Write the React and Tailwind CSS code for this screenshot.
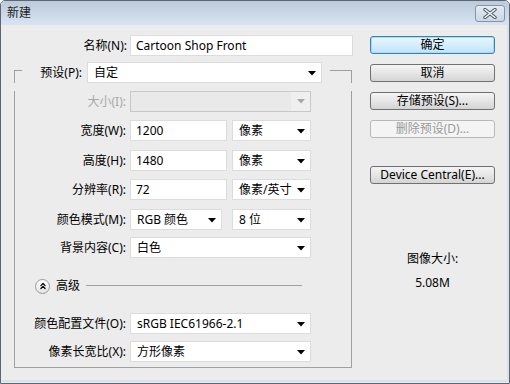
import { ChevronsUp } from 'lucide-react';

const font = { fontFamily: '"Noto Sans", "Noto Sans CJK SC", sans-serif' };

function Arrow({ gray }) {
  return (
    <svg width="8" height="5" viewBox="0 0 8 5" className="shrink-0">
      <polygon points="0,0 8,0 4,4.5" fill={gray ? '#a8a8a8' : '#000'} />
    </svg>
  );
}

function Select({ value, className }) {
  return (
    <div
      className={`flex h-[21px] items-center justify-between border border-[#dcdcdc] bg-white pl-[6px] pr-[5px] pt-[1px] ${className}`}
    >
      <span className="whitespace-nowrap">{value}</span>
      <Arrow />
    </div>
  );
}

function TextBox({ value, className }) {
  return (
    <div className={`flex h-[21px] items-center border border-[#dcdcdc] bg-white pl-[5px] ${className}`}>
      <span className="whitespace-nowrap">{value}</span>
    </div>
  );
}

function Row({ label, children, className }) {
  return (
    <div className={`flex h-[21px] items-center ${className}`}>
      <div className="w-[112px] whitespace-nowrap pr-[1px] text-right">{label}</div>
      <div className="ml-[3px] flex items-center gap-[5px]">{children}</div>
    </div>
  );
}

function Button({ children, primary, disabled, className }) {
  let look = 'border-[#707070] bg-gradient-to-b from-[#f4f4f4] via-[#e6e6e6] to-[#d4d4d4] text-black';
  if (primary)
    look =
      'border-[#3c7fb1] bg-gradient-to-b from-[#eaf6fd] via-[#d5eefc] to-[#bfe3f9] text-black shadow-[inset_0_0_0_1px_#9ee0fb]';
  if (disabled) look = 'border-[#b5b9bc] bg-[#f4f4f4] text-[#9a9a9a]';
  return (
    <div
      className={`flex h-[18px] w-[125px] items-center justify-center rounded-[3px] border leading-none ${look} ${className}`}
    >
      {children}
    </div>
  );
}

export default function App() {
  return (
    <div
      style={font}
      className="h-[384px] w-[510px] overflow-hidden rounded-t-[5px] border border-[#5d6773] bg-[#ececec] text-[12px] text-black"
    >
      {/* 标题栏 */}
      <div className="flex h-[24px] items-center justify-between bg-gradient-to-b from-[#bccadb] to-[#d8e4f1] pl-[6px] pr-[4px]">
        <span className="text-[#222]">新建</span>
        <div className="mt-[1px] flex h-[17px] w-[30px] items-center justify-center rounded-[3px] border border-[#8494a8] bg-gradient-to-b from-[#e3ebf4] to-[#cbd7e5]">
          <svg width="14" height="11" viewBox="0 0 14 11">
            <path d="M2 1.5 L12 9.5 M12 1.5 L2 9.5" stroke="#4a5563" strokeWidth="3.4" strokeLinecap="round" />
            <path d="M2 1.5 L12 9.5 M12 1.5 L2 9.5" stroke="#f4f6f8" strokeWidth="1.6" strokeLinecap="round" />
          </svg>
        </div>
      </div>

      <div className="flex h-[357px] border-b-[2px] border-r-[2px] border-[#d9e1ec]">
        {/* 左侧 */}
        <div className="w-[352px] pt-[10px]">
          <div className="flex h-[21px] items-center">
            <div className="w-[126px] text-right">名称(N):</div>
            <TextBox value="Cartoon Shop Front" className="ml-[3px] w-[223px]" />
          </div>

          <div className="ml-[13px] mt-[6px] w-[338px]">
            <div className="flex h-[21px]">
              <div className="mt-[8px] w-[8px] border-l border-t border-[#a0a0a0]" />
              <div className="flex w-[65px] items-center justify-end pr-[5px]">预设(P):</div>
              <Select value="自定" className="w-[235px]" />
              <div className="ml-[8px] mt-[8px] flex-1 border-r border-t border-[#a0a0a0]" />
            </div>
            <div className="border-x border-b border-[#a0a0a0] pb-[5px]">
              <Row label={<span className="text-[#a8a8a8]">大小(I):</span>} className="mt-[8px]">
                <div className="flex h-[21px] w-[181px] items-center border border-[#c8c8c8] bg-[#e9e9e9]">
                  <div className="h-full flex-1" />
                  <div className="flex h-full w-[19px] items-center justify-center bg-[#efefef]">
                    <Arrow gray />
                  </div>
                </div>
              </Row>
              <Row label="宽度(W):" className="mt-[8px]">
                <TextBox value="1200" className="w-[97px]" />
                <Select value="像素" className="w-[79px]" />
              </Row>
              <Row label="高度(H):" className="mt-[9px]">
                <TextBox value="1480" className="w-[97px]" />
                <Select value="像素" className="w-[79px]" />
              </Row>
              <Row label="分辨率(R):" className="mt-[8px]">
                <TextBox value="72" className="w-[97px]" />
                <Select value="像素/英寸" className="w-[79px]" />
              </Row>
              <Row label="颜色模式(M):" className="mt-[9px]">
                <Select value="RGB 颜色" className="w-[92px]" />
                <Select value="8 位" className="ml-[5px] w-[79px]" />
              </Row>
              <Row label="背景内容(C):" className="mt-[7px]">
                <Select value="白色" className="w-[181px]" />
              </Row>

              {/* 高级 */}
              <div className="ml-[20px] mt-[20px] flex h-[16px] items-center">
                <div className="flex h-[15px] w-[15px] items-center justify-center rounded-full border border-[#9a9a9a] bg-gradient-to-b from-white to-[#e4e4e4]">
                  <ChevronsUp size={10} strokeWidth={3} />
                </div>
                <span className="ml-[6px]">高级</span>
                <div className="ml-[6px] mr-[49px] mt-[-2px] flex-1 border-t border-[#a0a0a0]" />
              </div>

              <Row label="颜色配置文件(O):" className="mt-[19px]">
                <Select value="sRGB IEC61966-2.1" className="w-[181px]" />
              </Row>
              <Row label="像素长宽比(X):" className="mt-[7px]">
                <Select value="方形像素" className="w-[181px]" />
              </Row>
            </div>
          </div>
        </div>

        {/* 右侧按钮 */}
        <div className="ml-[17px] flex w-[125px] flex-col pt-[11px]">
          <Button primary>确定</Button>
          <Button className="mt-[10px]">取消</Button>
          <Button className="mt-[10px]">存储预设(S)...</Button>
          <Button disabled className="mt-[10px]">删除预设(D)...</Button>
          <Button className="mt-[28px]">Device Central(E)...</Button>
          <div className="mt-[67px] text-center leading-[16px]">图像大小:</div>
          <div className="mt-[8px] text-center leading-[16px]">5.08M</div>
        </div>
      </div>
    </div>
  );
}
